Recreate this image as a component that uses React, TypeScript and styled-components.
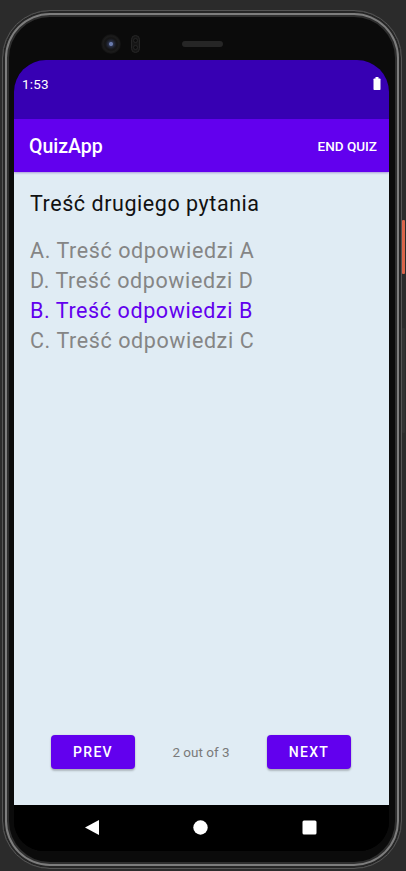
import React from "react";
import styled, { createGlobalStyle } from "styled-components";

const Global = createGlobalStyle`
  html, body { margin: 0; padding: 0; background: #2b2b2b; }
  body { font-family: Roboto, "Noto Sans", sans-serif; overflow: hidden; }
  * { box-sizing: border-box; }
`;

const Stage = styled.div`
  width: 406px;
  height: 871px;
  padding: 10px 0 0 2px;
`;

const Phone = styled.div`
  position: relative;
  width: 400px;
  height: 859px;
  border-radius: 48px;
  background: #0b0b0b;
  border: 1px solid #555;
  box-shadow: inset 0 0 0 2px #262626, inset 0 0 0 4px #7d7d7d,
    inset 0 0 0 6px #2e2e2e;
  padding: 0 12px 17px 11px;
  display: flex;
  flex-direction: column;
`;

const SideButton = styled.div<{ $top: number; $h: number; $c: string }>`
  position: absolute;
  right: -4px;
  top: ${(p) => p.$top}px;
  width: 3px;
  height: ${(p) => p.$h}px;
  background: ${(p) => p.$c};
  border-radius: 1px;
`;

const TopBezel = styled.div`
  height: 49px;
  flex: none;
  display: flex;
  align-items: center;
  padding: 16px 0 0 87px;
`;

const Camera = styled.div`
  width: 20px;
  height: 20px;
  border-radius: 50%;
  background: radial-gradient(circle at 50% 50%, #6a7cae 0 1.5px, #2a3148 2.5px, #1b1d24 4.5px, #141414 6px, #1c1c1c 8px, #101010 10px);
`;

const Sensor = styled.div`
  margin-left: 10px;
  width: 9px;
  height: 18px;
  border-radius: 5px;
  background: #161616;
  border: 1px solid #262626;
  display: flex;
  flex-direction: column;
  align-items: center;
  justify-content: space-around;
  padding: 1px 0;
`;

const SensorDot = styled.div`
  width: 5px;
  height: 5px;
  border-radius: 50%;
  background: #0c0c0c;
  border: 1px solid #262626;
`;

const Speaker = styled.div`
  margin-left: 42px;
  width: 41px;
  height: 6px;
  border-radius: 3px;
  background: #262626;
`;

const Screen = styled.div`
  flex: 1;
  display: flex;
  flex-direction: column;
  border-radius: 32px 32px 30px 30px;
  overflow: hidden;
  background: #000;
`;

const StatusBar = styled.div`
  height: 59px;
  flex: none;
  background: #3700b3;
  display: flex;
  justify-content: space-between;
  align-items: flex-start;
  padding: 17px 8px 0 8px;
  color: #fff;
`;

const Clock = styled.span`
  font-size: 13.5px;
  line-height: 15px;
  letter-spacing: 0.2px;
`;

const AppBar = styled.div`
  height: 53px;
  flex: none;
  background: #6200ee;
  display: flex;
  align-items: center;
  justify-content: space-between;
  padding: 1px 12px 0 15px;
  color: #fff;
  position: relative;
  z-index: 1;
  box-shadow: 0 1px 2px rgba(60, 0, 160, 0.35);
`;

const Title = styled.span`
  font-size: 19.5px;
  font-weight: 500;
`;

const Action = styled.span`
  font-size: 13.5px;
  font-weight: 500;
`;

const Content = styled.div`
  flex: 1;
  background: #e0ecf4;
  display: flex;
  flex-direction: column;
  padding: 18px 0 36px 16px;
`;

const Question = styled.div`
  font-size: 21.5px;
  line-height: 28px;
  letter-spacing: 0.55px;
  color: #111;
`;

const Answers = styled.div`
  margin-top: 18px;
  display: flex;
  flex-direction: column;
`;

const Answer = styled.div<{ $selected?: boolean }>`
  font-size: 21.5px;
  line-height: 30px;
  letter-spacing: 0.6px;
  color: ${(p) => (p.$selected ? "#6200ee" : "#858585")};
`;

const Footer = styled.div`
  margin-top: auto;
  display: flex;
  align-items: center;
  justify-content: space-between;
  padding: 0 38px 0 21px;
`;

const Btn = styled.button`
  height: 34px;
  width: 84px;
  border: none;
  border-radius: 4px;
  background: #6200ee;
  color: #fff;
  font-family: Roboto, sans-serif;
  font-size: 14px;
  font-weight: 500;
  letter-spacing: 1.3px;
  padding: 0;
  box-shadow: 0 2px 2px rgba(0, 0, 0, 0.22), 0 0 2px rgba(0, 0, 0, 0.12);
`;

const Counter = styled.span`
  font-size: 13.5px;
  color: #7a7a7a;
`;

const NavBar = styled.div`
  height: 46px;
  flex: none;
  background: #000;
  display: flex;
  align-items: center;
  justify-content: center;
  gap: 94px;
  padding: 0 2px 1px 0;
`;

export default function App() {
  return (
    <Stage>
      <Global />
      <Phone>
        <SideButton $top={209} $h={54} $c="#d9654c" />
        <SideButton $top={317} $h={105} $c="#333" />
        <TopBezel>
          <Camera />
          <Sensor>
            <SensorDot />
            <SensorDot />
          </Sensor>
          <Speaker />
        </TopBezel>
        <Screen>
          <StatusBar>
            <Clock>1:53</Clock>
            <svg width="8" height="13" viewBox="0 0 8 13">
              <rect x="2.5" y="0" width="3" height="2" fill="#fff" />
              <rect x="0.5" y="1.5" width="7" height="11.5" rx="0.8" fill="#fff" />
            </svg>
          </StatusBar>
          <AppBar>
            <Title>QuizApp</Title>
            <Action>END QUIZ</Action>
          </AppBar>
          <Content>
            <Question>Treść drugiego pytania</Question>
            <Answers>
              <Answer>A. Treść odpowiedzi A</Answer>
              <Answer>D. Treść odpowiedzi D</Answer>
              <Answer $selected>B. Treść odpowiedzi B</Answer>
              <Answer>C. Treść odpowiedzi C</Answer>
            </Answers>
            <Footer>
              <Btn>PREV</Btn>
              <Counter>2 out of 3</Counter>
              <Btn>NEXT</Btn>
            </Footer>
          </Content>
          <NavBar>
            <svg width="14" height="15" viewBox="0 0 14 15">
              <path d="M14 0 L14 15 L0 7.5 Z" fill="#fff" />
            </svg>
            <svg width="15" height="15" viewBox="0 0 15 15">
              <circle cx="7.5" cy="7.5" r="7.2" fill="#fff" />
            </svg>
            <svg width="15" height="15" viewBox="0 0 15 15">
              <rect x="0.5" y="0.5" width="14" height="14" rx="1.5" fill="#fff" />
            </svg>
          </NavBar>
        </Screen>
      </Phone>
    </Stage>
  );
}
